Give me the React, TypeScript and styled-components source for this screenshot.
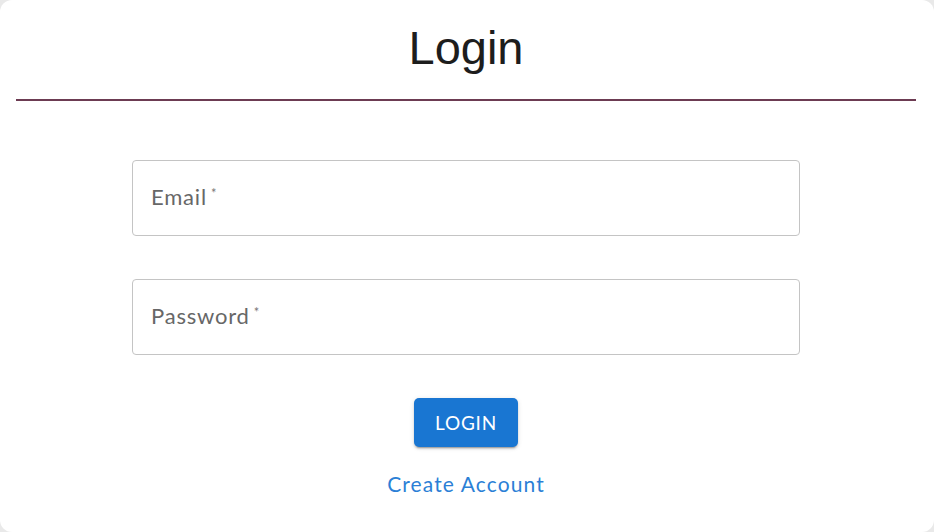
import React from "react";
import styled, { createGlobalStyle } from "styled-components";

const Global = createGlobalStyle`
  html, body { margin: 0; padding: 0; background: #e9e9e9; }
  body { font-family: "Lato", "Open Sans", sans-serif; }
  * { box-sizing: border-box; }
`;

const Card = styled.main`
  min-height: 100vh;
  background: #ffffff;
  border-radius: 12px;
  display: flex;
  flex-direction: column;
  align-items: center;
  padding: 21px 2px 0 0;
`;

const Title = styled.h1`
  margin: 0;
  font-family: "Liberation Sans", Arial, sans-serif;
  font-weight: 400;
  font-size: 47px;
  color: #1d1d1d;
  line-height: 53px;
`;

const Divider = styled.hr`
  align-self: stretch;
  margin: 25px 16px 0;
  border: none;
  height: 2px;
  background: #6c3b52;
`;

const Form = styled.form`
  width: 668px;
  margin-top: 59px;
  display: flex;
  flex-direction: column;
  align-items: center;
  gap: 43px;
`;

const Field = styled.label`
  width: 100%;
  height: 76px;
  border: 1px solid #c4c4c4;
  border-radius: 4px;
  display: flex;
  align-items: center;
  padding: 0 0 3px 18px;
  font-size: 22px;
  letter-spacing: 0.8px;
  color: #676767;
  cursor: text;
`;

const Star = styled.span`
  font-size: 13px;
  align-self: flex-start;
  margin-top: 24px;
  margin-left: 4px;
  color: #777;
`;

const Button = styled.button`
  width: 104px;
  height: 49px;
  border: none;
  border-radius: 5px;
  background: #1976d2;
  color: #fff;
  font-family: inherit;
  font-size: 19px;
  letter-spacing: 0.8px;
  box-shadow: 0 3px 1px -2px rgba(0,0,0,0.2), 0 2px 2px 0 rgba(0,0,0,0.14), 0 1px 5px 0 rgba(0,0,0,0.12);
  cursor: pointer;
`;

const Link = styled.a`
  margin-top: 24px;
  font-size: 21px;
  letter-spacing: 1.1px;
  color: #2b7fd6;
  text-decoration: none;
  line-height: 25px;
`;

export default function App() {
  return (
    <>
      <Global />
      <Card>
        <Title>Login</Title>
        <Divider />
        <Form onSubmit={(e) => e.preventDefault()}>
          <Field>
            Email<Star>*</Star>
          </Field>
          <Field>
            Password<Star>*</Star>
          </Field>
          <Button type="submit">LOGIN</Button>
        </Form>
        <Link href="#">Create Account</Link>
      </Card>
    </>
  );
}
